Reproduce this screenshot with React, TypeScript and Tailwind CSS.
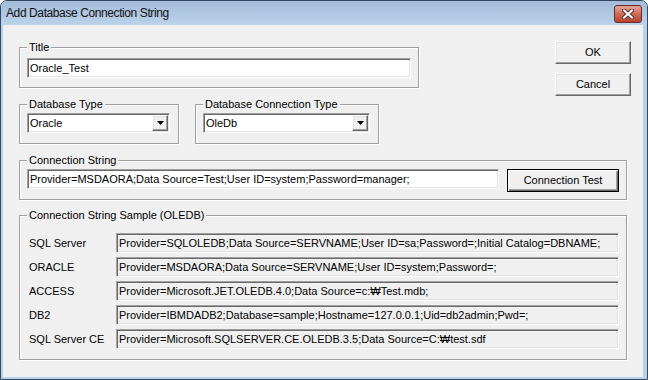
import React from "react";

const sunken =
  "border border-t-[#a0a0a0] border-l-[#a0a0a0] border-b-white border-r-white shadow-[inset_1px_1px_0_#696969,inset_-1px_-1px_0_#e3e3e3]";
const raised =
  "border border-t-white border-l-white border-b-[#696969] border-r-[#696969] shadow-[inset_-1px_-1px_0_#a0a0a0,inset_1px_1px_0_#e3e3e3]";

function GroupBox({
  label,
  className,
  children,
}: {
  label: string;
  className: string;
  children: React.ReactNode;
}) {
  return (
    <div
      className={`relative border border-[#a0a0a0] shadow-[inset_1px_1px_0_#fff,1px_1px_0_#fff] ${className}`}
    >
      {/* label sits on the etched line */}
      <span className="absolute left-[7px] top-[-7px] bg-[#f0f0f0] px-[2px] text-[11px] leading-[13px] whitespace-nowrap">
        {label}
      </span>
      {children}
    </div>
  );
}

function TextBox({ value, className }: { value: string; className: string }) {
  return (
    <div
      className={`${sunken} h-[20px] bg-white flex items-center pl-[2px] whitespace-nowrap overflow-hidden ${className}`}
    >
      {value}
    </div>
  );
}

function Combo({ value, className }: { value: string; className: string }) {
  return (
    <div className={`${sunken} h-[20px] bg-white flex items-stretch p-[1px] ${className}`}>
      <span className="flex-1 flex items-center pl-[1px]">{value}</span>
      <span className={`${raised} w-[16px] bg-[#f0f0f0] flex items-center justify-center`}>
        <svg width="7" height="4" viewBox="0 0 7 4">
          <path d="M0 0h7L3.5 4z" fill="#000" />
        </svg>
      </span>
    </div>
  );
}

function Button({ children, className }: { children: React.ReactNode; className: string }) {
  return (
    <div className={`${raised} bg-[#f0f0f0] flex items-center justify-center ${className}`}>
      {children}
    </div>
  );
}

const samples = [
  ["SQL Server", "Provider=SQLOLEDB;Data Source=SERVNAME;User ID=sa;Password=;Initial Catalog=DBNAME;"],
  ["ORACLE", "Provider=MSDAORA;Data Source=SERVNAME;User ID=system;Password=;"],
  ["ACCESS", "Provider=Microsoft.JET.OLEDB.4.0;Data Source=c:\u20A9Test.mdb;"],
  ["DB2", "Provider=IBMDADB2;Database=sample;Hostname=127.0.0.1;Uid=db2admin;Pwd=;"],
  ["SQL Server CE", "Provider=Microsoft.SQLSERVER.CE.OLEDB.3.5;Data Source=C:\u20A9test.sdf"],
];

export default function App() {
  return (
    <div className="w-[648px] h-[380px] border border-[#34495f] rounded-t-[7px] bg-[#b9d1ea] flex flex-col overflow-hidden font-['Liberation_Sans',Arial,sans-serif] text-[11px] text-black">
      {/* Title bar */}
      <div className="h-[24px] shrink-0 flex items-center bg-gradient-to-b from-[#a3bcd9] to-[#bcd2ea] pl-[5px] pr-[5px]">
        <span className="text-[12px] tracking-[-0.4px] text-[#111]">
          Add Database Connection String
        </span>
        <div className="ml-auto mt-[1px] w-[28px] h-[18px] rounded-[3px] border border-[#6b2b2b] bg-gradient-to-b from-[#e5a597] via-[#cf6a58] to-[#b9402e] flex items-center justify-center">
          <svg width="12" height="10" viewBox="0 0 12 10">
            <path d="M2 1.5l8 7M10 1.5l-8 7" stroke="#5c3434" strokeWidth="4" strokeLinecap="square" />
            <path d="M2 1.5l8 7M10 1.5l-8 7" stroke="#fff" strokeWidth="2" strokeLinecap="square" />
          </svg>
        </div>
      </div>

      {/* Client area */}
      <div className="ml-[2px] w-[640px] h-[352px] bg-[#f0f0f0] flex flex-col">
        <div className="flex">
          <div className="flex flex-col ml-[16px] mt-[22px]">
            <GroupBox label="Title" className="w-[400px] h-[41px] pl-[7px] pt-[10px]">
              <TextBox value="Oracle_Test" className="w-[384px]" />
            </GroupBox>
            <div className="flex gap-[16px] mt-[16px]">
              <GroupBox label="Database Type" className="w-[160px] h-[40px] pl-[7px] pt-[8px]">
                <Combo value="Oracle" className="w-[143px]" />
              </GroupBox>
              <GroupBox label="Database Connection Type" className="w-[184px] h-[40px] pl-[7px] pt-[8px]">
                <Combo value="OleDb" className="w-[167px]" />
              </GroupBox>
            </div>
          </div>
          <div className="flex flex-col gap-[9px] ml-auto mr-[12px] mt-[16px]">
            <Button className="w-[76px] h-[23px]">OK</Button>
            <Button className="w-[76px] h-[23px]">Cancel</Button>
          </div>
        </div>

        <GroupBox label="Connection String" className="ml-[16px] mt-[16px] w-[608px] h-[40px] pl-[7px] pt-[8px] flex items-start gap-[8px]">
          <TextBox
            value="Provider=MSDAORA;Data Source=Test;User ID=system;Password=manager;"
            className="w-[472px]"
          />
          <div className="border border-black w-[112px] h-[23px] bg-[#f0f0f0] flex items-center justify-center shadow-[inset_1px_1px_0_#fff,inset_-1px_-1px_0_#696969,inset_-2px_-2px_0_#a0a0a0]">
            Connection Test
          </div>
        </GroupBox>

        <GroupBox label="Connection String Sample (OLEDB)" className="ml-[16px] mt-[15px] w-[608px] h-[145px] pl-[9px] pt-[17px] flex flex-col gap-[4px]">
          {samples.map(([name, value]) => (
            <div key={name} className="flex items-center h-[20px]">
              <span className="w-[87px] shrink-0">{name}</span>
              <div className={`${sunken} w-[503px] h-[20px] flex items-center pl-[2px] whitespace-nowrap overflow-hidden`}>
                {value}
              </div>
            </div>
          ))}
        </GroupBox>
      </div>
    </div>
  );
}
